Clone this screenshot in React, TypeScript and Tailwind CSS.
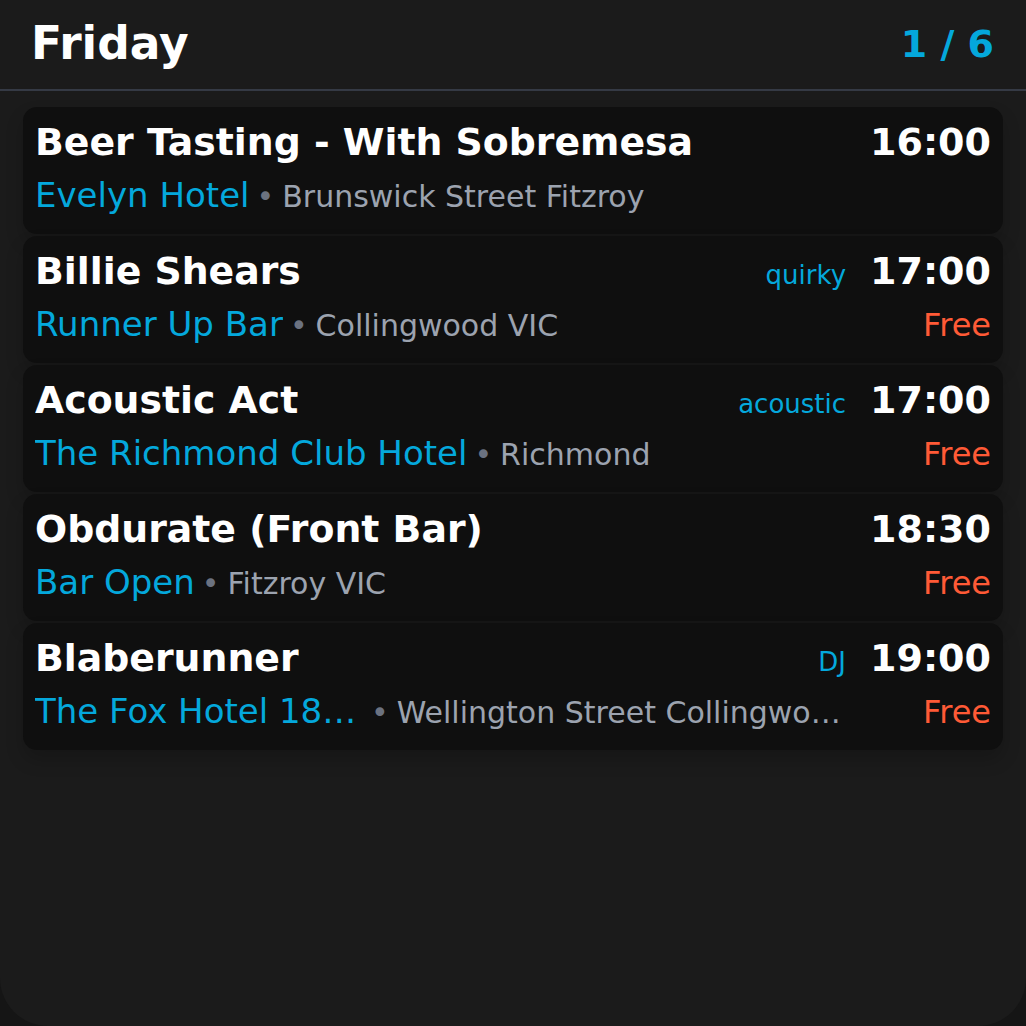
import React from "react";

type Ev = {
  title: string;
  time: string;
  venue: string;
  address: string;
  tag?: string;
  price?: string;
};

const events: Ev[] = [
  { title: "Beer Tasting - With Sobremesa", time: "16:00", venue: "Evelyn Hotel", address: "Brunswick Street Fitzroy" },
  { title: "Billie Shears", time: "17:00", venue: "Runner Up Bar", address: "Collingwood VIC", tag: "quirky", price: "Free" },
  { title: "Acoustic Act", time: "17:00", venue: "The Richmond Club Hotel", address: "Richmond", tag: "acoustic", price: "Free" },
  { title: "Obdurate (Front Bar)", time: "18:30", venue: "Bar Open", address: "Fitzroy VIC", price: "Free" },
  { title: "Blaberunner", time: "19:00", venue: "The Fox Hotel 1869", address: "Wellington Street Collingwood", tag: "DJ", price: "Free" },
];

function Card({ e }: { e: Ev }) {
  return (
    <div className="grid grid-cols-[minmax(0,1fr)_auto] items-baseline gap-x-[24px] gap-y-[11px] rounded-[14px] bg-[#0f0f0f] px-[12px] pt-[13px] pb-[19px] shadow-[0_10px_18px_rgba(0,0,0,0.18)]">
      <div className="flex min-w-0 items-baseline">
        <div className="truncate text-[37.8px] leading-[44px] font-bold text-white">{e.title}</div>
        {e.tag && (
          <div className="ml-auto shrink-0 pl-4 text-[26px] leading-[30px] text-[#04a8dc]">{e.tag}</div>
        )}
      </div>
      <div className="text-right text-[38px] leading-[44px] font-bold text-white">{e.time}</div>
      <div className="flex min-w-0 items-baseline">
        <div className="min-w-0 truncate text-[34px] leading-[40px] text-[#04a8dc]">{e.venue}</div>
        <div className="ml-[7px] mr-[8px] shrink-0 text-[30px] leading-[36px] text-[#6b7280]">•</div>
        <div className="min-w-0 truncate text-[30px] leading-[36px] text-[#9ca3af]">{e.address}</div>
      </div>
      <div className="text-right text-[32px] leading-[36px] text-[#ff5a36]">{e.price ?? ""}</div>
    </div>
  );
}

export default function App() {
  return (
    <div className="h-[1026px] w-[1026px] bg-[#151515] font-['DejaVu_Sans',sans-serif]">
      <div className="h-full w-full overflow-hidden rounded-b-[48px] bg-[#1b1b1b]">
        <div className="flex h-[91px] items-center justify-between border-b-2 border-[#353a45] pl-[31px] pr-[32px]">
          <div className="text-[45.5px] font-bold text-white">Friday</div>
          <div className="text-[38px] font-bold text-[#04a8dc]">1 / 6</div>
        </div>
        <div className="flex flex-col gap-[2px] px-[23px] pt-[16px]">
          {events.map((e, i) => (
            <Card key={i} e={e} />
          ))}
        </div>
      </div>
    </div>
  );
}
